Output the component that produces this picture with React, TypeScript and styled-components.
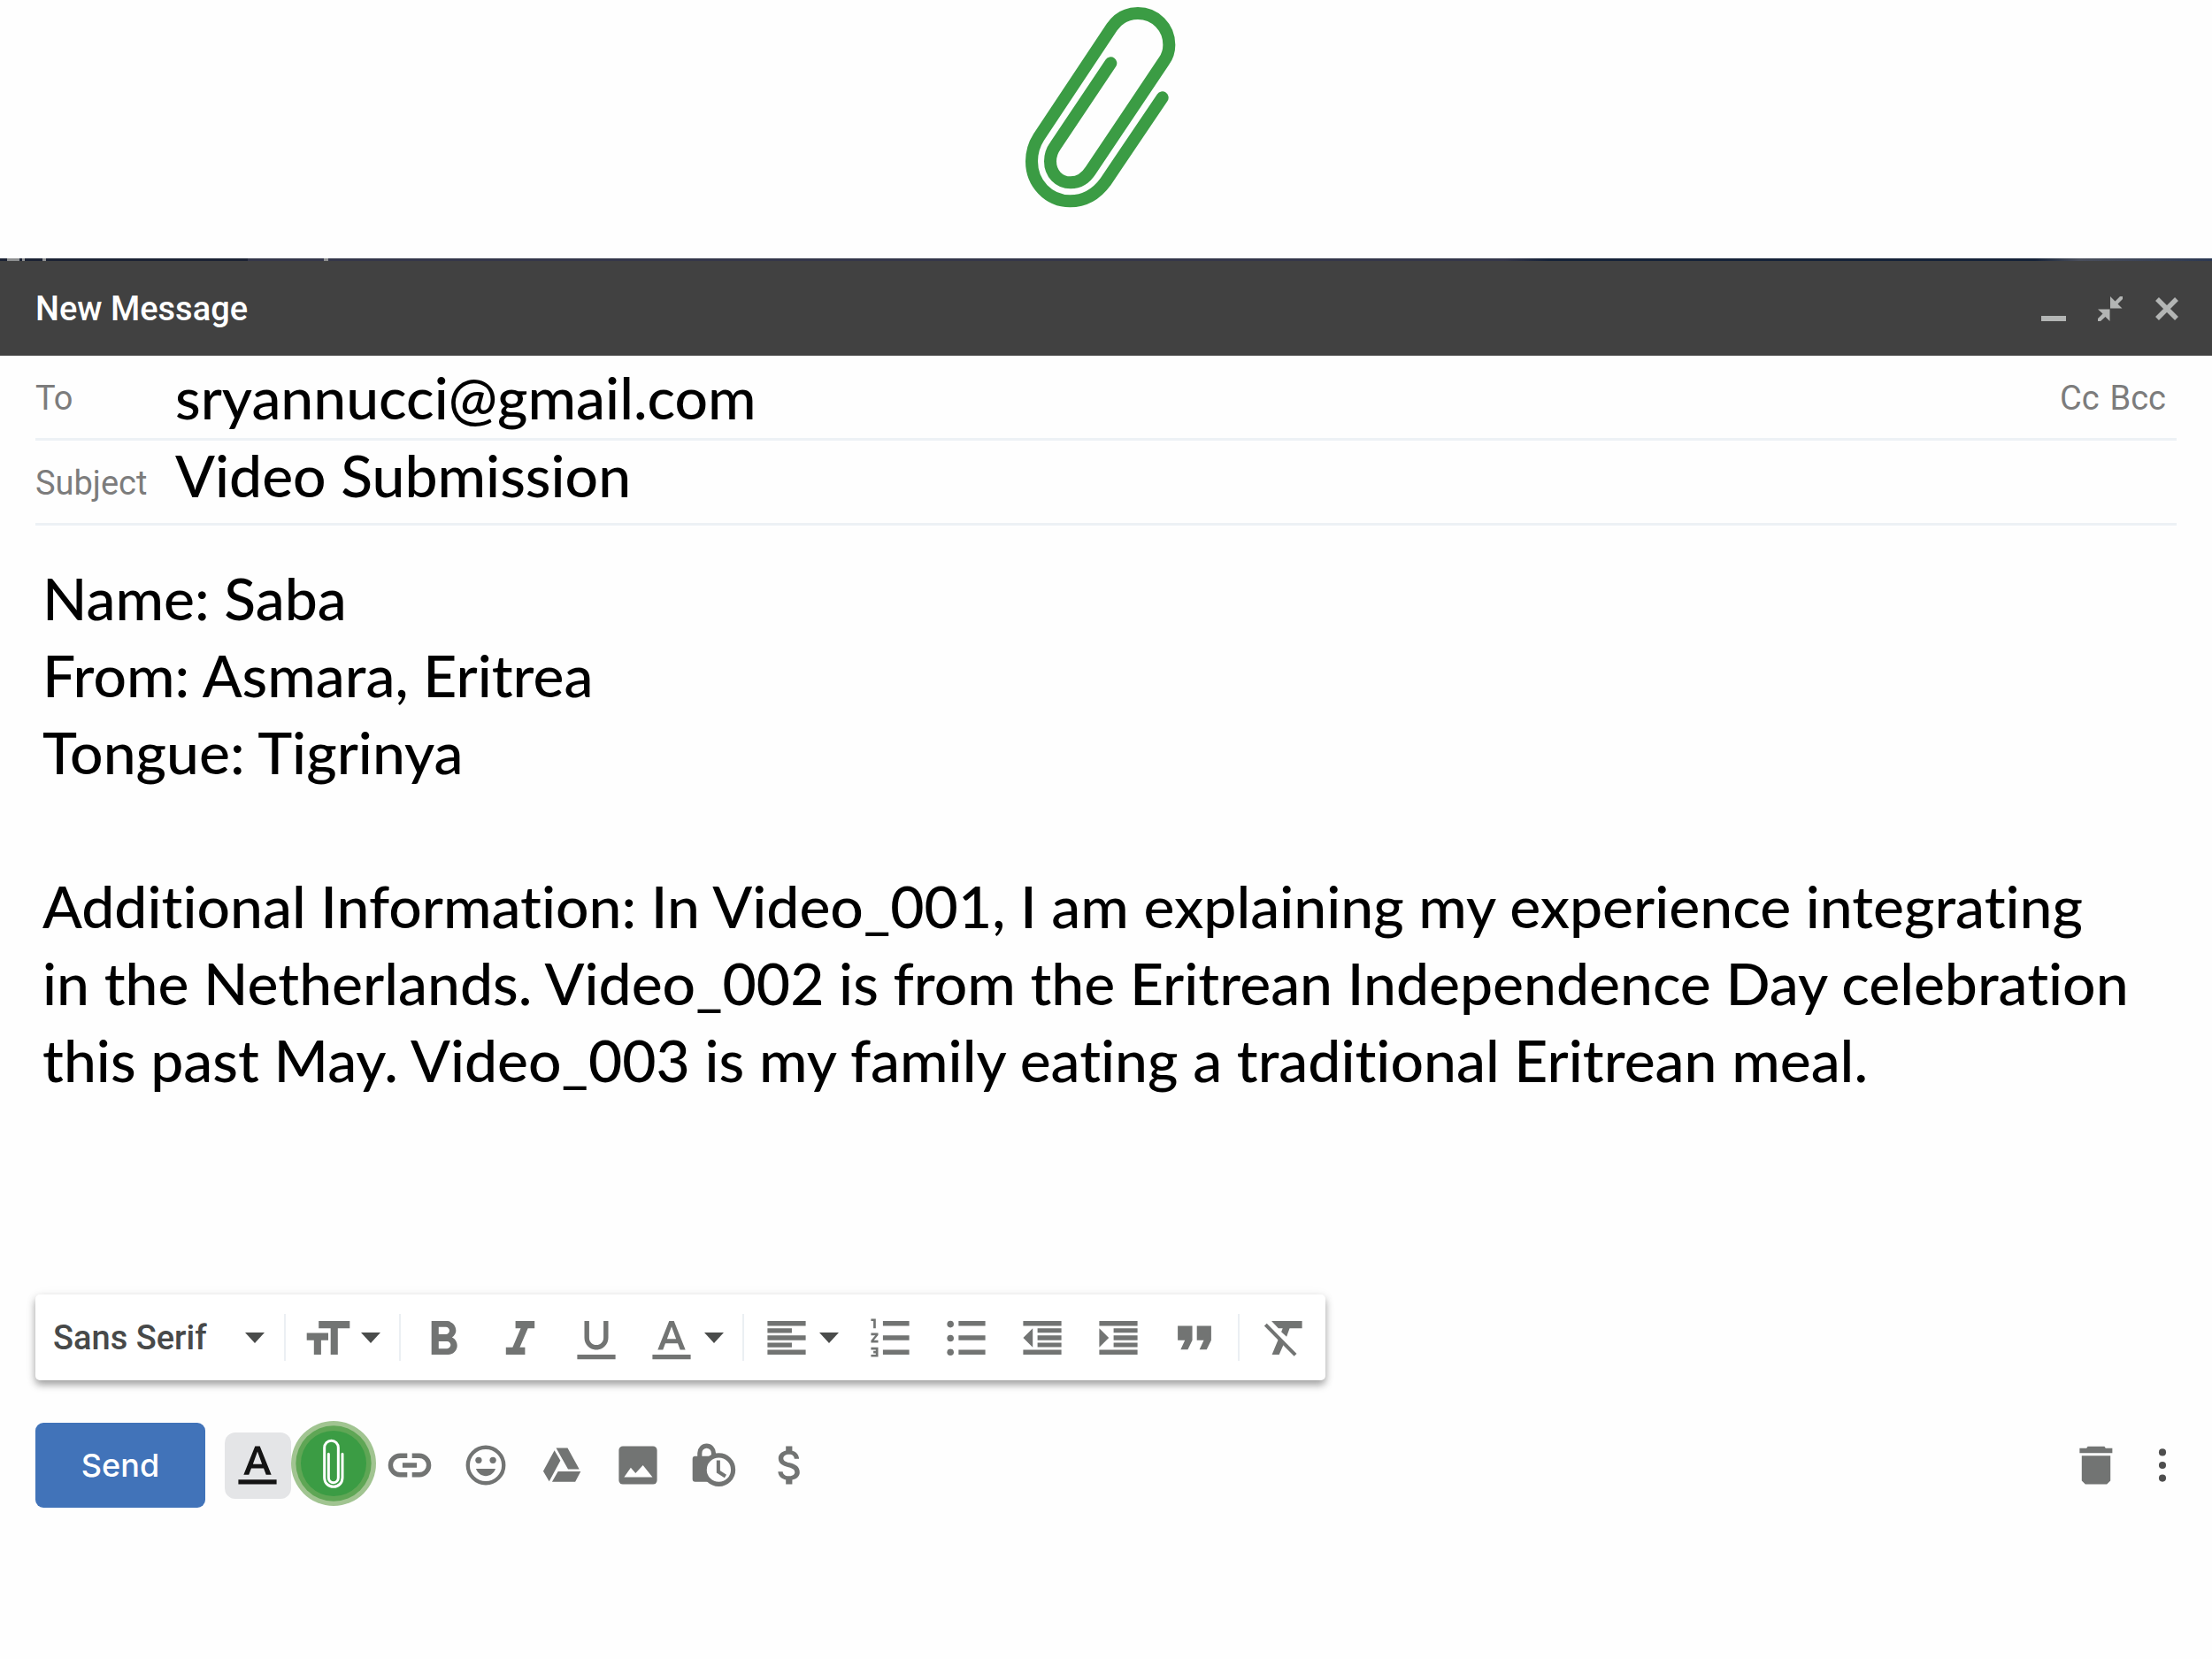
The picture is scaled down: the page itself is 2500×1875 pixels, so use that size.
import React, { useState } from "react";
import styled, { createGlobalStyle } from "styled-components";

const GlobalStyle = createGlobalStyle`
  *, *::before, *::after { box-sizing: border-box; }
  body { margin: 0; background: #fefefe; }
  button, input, select, textarea { font: inherit; color: inherit; }
`;

const ui = `Roboto, "Liberation Sans", sans-serif`;
const writing = `Futura, Lato, "Liberation Sans", sans-serif`;

const Page = styled.main`
  display: flex;
  flex-direction: column;
  font-family: ${ui};
  font-size: 38px;
  line-height: 44px;
  color: #727473;
`;

const Hero = styled.div`
  display: flex;
  justify-content: center;
  height: 292px;
`;

const Backdrop = styled.div`
  height: 3px;
  background: linear-gradient(
    90deg,
    #1b2233 0 8px,
    #8d8f90 8px 22px,
    #1b2233 22px 25px,
    #8d8f90 25px 28px,
    #1b2233 28px 48px,
    #8d8f90 48px 52px,
    #1b2233 52px 280px,
    #34364a 280px 366px,
    #8d8f90 366px 371px,
    #34364a 371px 68%,
    #152238 70% 92%,
    #4a4f5c 94%,
    #2c3852
  );
`;

const TitleBar = styled.header`
  display: flex;
  align-items: center;
  justify-content: space-between;
  height: 107px;
  padding: 0 19px 0 40px;
  background: #414141;
  color: #b3b5b4;
`;

const Title = styled.h1`
  margin: 0;
  font-size: 38px;
  font-weight: 500;
  color: #fff;
`;

const Group = styled.div`
  display: flex;
  align-items: center;
`;

const BareButton = styled.button`
  display: flex;
  align-items: center;
  justify-content: center;
  flex: none;
  padding: 0;
  border: 0;
  background: none;
  cursor: pointer;
`;

const WindowButton = styled(BareButton)`
  width: 64px;
  height: 64px;
`;

const Form = styled.form`
  display: flex;
  flex-direction: column;
  padding: 0 40px;
`;

const Field = styled.div`
  display: flex;
  align-items: center;
  height: 96px;
  padding-top: 3px;
  border-bottom: 3px solid #edf1f5;
`;

const FieldLabel = styled.label`
  width: 158px;
  color: #7c7c7c;
`;

const FieldInput = styled.input<{ $raised?: boolean }>`
  flex: 1;
  min-width: 0;
  height: 90px;
  padding: 0 0 ${(p) => (p.$raised ? 20 : 4)}px;
  border: 0;
  outline: 0;
  background: none;
  font-family: ${writing};
  font-size: 66px;
  font-weight: 500;
  font-variant-ligatures: none;
  color: #000;
`;

const CopyLinks = styled.div`
  display: flex;
  gap: 12px;
  padding-right: 12px;
  color: #7c7c7c;
`;

const MessageBody = styled.textarea`
  width: 100%;
  margin: 0 0 48px;
  padding: 38px 0 0 8px;
  border: 0;
  outline: 0;
  resize: none;
  overflow: hidden;
  background: none;
  font-family: ${writing};
  font-size: 66px;
  font-weight: 500;
  font-variant-ligatures: none;
  line-height: 87px;
  color: #000;
`;

const FormatBar = styled.div`
  display: flex;
  align-items: center;
  align-self: flex-start;
  height: 97px;
  padding-right: 5px;
  border-radius: 5px;
  background: #fff;
  box-shadow: 0 5px 8px rgba(0, 0, 0, 0.34), 0 2px 14px rgba(0, 0, 0, 0.07);
`;

const FontPicker = styled.div`
  display: grid;
  align-items: center;
  width: 275px;
  height: 97px;
  color: #474949;

  > * { grid-area: 1 / 1; }
  > svg { justify-self: end; margin-right: 16px; pointer-events: none; }
`;

const FontSelect = styled.select`
  width: 100%;
  height: 97px;
  padding: 0 0 0 20px;
  border: 0;
  outline: 0;
  appearance: none;
  background: none;
  font-weight: 500;
`;

const Divider = styled.span`
  width: 2px;
  height: 53px;
  margin: 0 6px;
  background: #ebeff3;
`;

const ToolButton = styled(BareButton)`
  width: 86px;
  height: 96px;
`;

const MenuButton = styled(BareButton)`
  gap: 10px;
  height: 96px;
  padding: 0 15px;
`;

const ActionBar = styled.div`
  display: flex;
  align-items: center;
  justify-content: space-between;
  height: 96px;
  margin: 48px -16px 0 0;
`;

const SendButton = styled.button`
  width: 192px;
  height: 96px;
  margin-right: 16px;
  padding: 0;
  border: 0;
  border-radius: 9px;
  background: #4173b9;
  color: #fff;
  font-family: Inter, Roboto, sans-serif;
  font-size: 36px;
  font-weight: 500;
  cursor: pointer;
`;

const ActiveTile = styled.span`
  display: flex;
  align-items: center;
  justify-content: center;
  width: 75px;
  height: 75px;
  border-radius: 12px;
  background: #e4e5e7;
  color: #141414;
`;

const MoreButton = styled(BareButton)`
  width: 64px;
  height: 96px;
  color: #4e4e4e;
`;

const Glyph = styled.svg`
  display: block;
  flex: none;
  fill: currentColor;
`;

function Icon({ children, viewBox = "0 0 20 20" }: { children: React.ReactNode; viewBox?: string }) {
  return (
    <Glyph width="54" height="54" viewBox={viewBox} aria-hidden="true">
      {children}
    </Glyph>
  );
}

function Caret() {
  return (
    <Glyph width="22" height="12" viewBox="0 0 22 12" aria-hidden="true">
      <path d="M0 0h22L11 12z" fill="#4a4c4b" />
    </Glyph>
  );
}

const letterA = (
  <path
    fillRule="evenodd"
    d="M9 3h2l4.8 12h-2.2l-1-2.7H7.4l-1 2.7H4.2zM8.1 10.5h3.8L10 5.3zM2 17h16v2H2z"
  />
);

const tools = {
  size: <path d="M6 3h13v3h-5v11h-3V6H6zM1 8h9v3H7v6H4v-6H1z" />,
  bold: (
    <path
      transform="translate(-2.3 -1)"
      d="M15.6 10.79c.97-.67 1.65-1.77 1.65-2.79 0-2.26-1.75-4-4-4H7v14h7.04c2.09 0 3.71-1.7 3.71-3.79 0-1.52-.86-2.82-2.15-3.42zM10 6.5h3c.83 0 1.5.67 1.5 1.5s-.67 1.5-1.5 1.5h-3v-3zm3.5 9H10v-3h3.5c.83 0 1.5.67 1.5 1.5s-.67 1.5-1.5 1.5z"
    />
  ),
  italic: <path d="M8 3v3h2.2l-3.4 8H4v3h8v-3H9.8l3.4-8H16V3z" />,
  underline: (
    <path d="M10 15c-2.8 0-5-2.2-5-5V3h2v7c0 1.7 1.3 3 3 3s3-1.3 3-3V3h2v7c0 2.8-2.2 5-5 5zM2 17h16v2H2z" />
  ),
  align: <path d="M2 3h16v2H2zM2 6h10.2v2H2zM2 9h16v2H2zM2 12h10.2v2H2zM2 15h16v2H2z" />,
  numbered: (
    <path d="M2 15h2v.5H3v1h1v.5H2v1h3v-4H2zM3 6h1V2H2v1h1zM2 9h1.8L2 11.1v.9h3v-1H3.2L5 8.9V8H2zM7 3h11v2H7zM7 9h11v2H7zM7 15h11v2H7z" />
  ),
  bullets: (
    <>
      <circle cx="3.4" cy="4.3" r="1.4" />
      <circle cx="3.4" cy="10.2" r="1.4" />
      <circle cx="3.4" cy="16" r="1.4" />
      <path d="M6.8 3H18v2H6.8zM6.8 9H18v2H6.8zM6.8 15H18v2H6.8z" />
    </>
  ),
  outdent: <path d="M2 3h16v2H2zM8 6h10v1.9H8zM8 9h10v2H8zM8 12h10v1.9H8zM2 15h16v2H2zM2 10l4-4v8z" />,
  indent: <path d="M2 3h16v2H2zM8 6h10v1.9H8zM8 9h10v2H8zM8 12h10v1.9H8zM2 15h16v2H2zM2 6l4 4-4 4z" />,
  quote: <path d="M3 5h6.1v6l-1.9 3.9h-3L6 11H3zM11 5h6v6l-1.9 3.9h-3L13.9 11H11z" />,
  clear: (
    <>
      <path d="M5.2 3H18v3h-5.2l-1.3 3.5-2.2-2L9.9 6H8.1zM8.3 10.1L5.4 17h3l2-4.5z" />
      <path d="M2.7 4.5L15.2 17.2" stroke="currentColor" strokeWidth="1.5" />
    </>
  ),
  link: (
    <path d="M9 7H6a3 3 0 0 0 0 6h3v2H6A5 5 0 0 1 6 5h3zM11 5h3a5 5 0 0 1 0 10h-3v-2h3a3 3 0 0 0 0-6h-3zM7 9h6v2H7z" />
  ),
  emoji: (
    <>
      <circle cx="10" cy="10" r="7.5" fill="none" stroke="currentColor" strokeWidth="1.6" />
      <circle cx="7" cy="7.9" r="1.35" />
      <circle cx="13" cy="7.9" r="1.35" />
      <path d="M5.9 11.5h8.2c-.7 1.9-2.3 3-4.1 3s-3.4-1.1-4.1-3z" />
    </>
  ),
  drive: (
    <path d="M7.6 2.8h4.8l4.9 8.9h-4.7zM6.9 3.8l2.5 4.3-4.7 8.7-2.5-4.3zM8.4 12.6h9.5l-2.3 4.3H5.9z" />
  ),
  image: (
    <>
      <rect x="2" y="2" width="16" height="16" rx="1.7" />
      <path d="M4.2 15L7 11l2 2.3L12.1 10l4 5z" fill="#fefefe" />
    </>
  ),
  confidential: (
    <>
      <rect x="1" y="6.2" width="10" height="10.7" rx="1.1" />
      <path d="M4 7V4.9a2.9 3 0 0 1 5.8 0V7" fill="none" stroke="currentColor" strokeWidth="1.9" />
      <circle cx="12" cy="11.9" r="6" fill="#fefefe" stroke="currentColor" strokeWidth="1.9" />
      <path d="M11.8 8v4.7l3 1.9" fill="none" stroke="currentColor" strokeWidth="1.5" />
    </>
  ),
  money: (
    <path
      transform="translate(-.67 -.67) scale(.889)"
      d="M11.8 10.9c-2.27-.59-3-1.2-3-2.15 0-1.09 1.01-1.85 2.7-1.85 1.78 0 2.44.85 2.5 2.1h2.21c-.07-1.72-1.12-3.3-3.21-3.81V3h-3v2.16c-1.94.42-3.5 1.68-3.5 3.61 0 2.31 1.91 3.46 4.7 4.13 2.5.6 3 1.48 3 2.41 0 .69-.49 1.79-2.7 1.79-2.06 0-2.87-.92-2.98-2.1h-2.2c.12 2.19 1.76 3.42 3.68 3.83V21h3v-2.15c1.95-.37 3.5-1.5 3.5-3.55 0-2.84-2.43-3.81-4.7-4.4z"
    />
  ),
  trash: <path d="M6.5 2.1h7l.5.8h2.8v2H3.1v-2H6zM4 6h12v10.5l-1.5 1.5h-9L4 16.5z" />,
  more: (
    <>
      <circle cx="10" cy="4.6" r="1.5" />
      <circle cx="10" cy="10" r="1.5" />
      <circle cx="10" cy="15.4" r="1.5" />
    </>
  ),
};

function Tool({ name, label }: { name: keyof typeof tools; label: string }) {
  return (
    <ToolButton type="button" aria-label={label}>
      <Icon>{tools[name]}</Icon>
    </ToolButton>
  );
}

function PaperclipHero() {
  return (
    <svg width="240" height="292" viewBox="0 0 720 876" role="img" aria-label="Paperclip">
      <path
        d="M551 331L358 617C325 662 282 682 238 682C165 682 108 622 108 547C108 520 116 490 132 465L380 92C402 60 432 45 468 45C527 45 574 92 574 152C574 172 567 193 556 208L308 578C292 603 268 619 240 619C200 619 171 588 171 547C171 528 177 510 188 495L376 214"
        fill="none"
        stroke="#3b9c44"
        strokeWidth="42"
        strokeLinecap="round"
      />
    </svg>
  );
}

function AttachBadge() {
  return (
    <Glyph width="96" height="100" viewBox="0 0 288 300" aria-hidden="true">
      <circle cx="144" cy="144" r="144" fill="#a1c491" />
      <circle cx="144" cy="144" r="128" fill="#5fa655" />
      <circle cx="144" cy="144" r="111" fill="#3b9c44" />
      <path
        d="M174 112V192C174 210 161 223 144 223C126 223 113 210 113 192V91A23 24 0 0 1 160 91V192C160 202 153 209 144 209C134 209 127 202 127 192V112"
        fill="none"
        stroke="#fff"
        strokeWidth="9"
        strokeLinecap="round"
      />
    </Glyph>
  );
}

const draft = `Name: Saba
From: Asmara, Eritrea
Tongue: Tigrinya

Additional Information: In Video_001, I am explaining my experience integrating
in the Netherlands. Video_002 is from the Eritrean Independence Day celebration
this past May. Video_003 is my family eating a traditional Eritrean meal.`;

export default function App() {
  const [to, setTo] = useState("sryannucci@gmail.com");
  const [subject, setSubject] = useState("Video Submission");
  const [body, setBody] = useState(draft);

  return (
    <Page>
      <GlobalStyle />
      <Hero>
        <PaperclipHero />
      </Hero>
      <Backdrop />
      <TitleBar>
        <Title>New Message</Title>
        <Group>
          <WindowButton type="button" aria-label="Minimize">
            <Glyph width="28" height="28" viewBox="0 0 28 28">
              <path d="M0 22h28v6H0z" />
            </Glyph>
          </WindowButton>
          <WindowButton type="button" aria-label="Exit full screen">
            <Glyph width="28" height="28" viewBox="0 0 28 28">
              <path d="M14 0v13.5h13.5l-5-5L28 3V0h-3l-5.5 5.5zM0 14.5h13.5V28l-5-5L3 28H0v-3l5.500-5.500z" />
            </Glyph>
          </WindowButton>
          <WindowButton type="button" aria-label="Close">
            <Glyph width="26" height="26" viewBox="0 0 26 26">
              <path d="M2 2l22 22M24 2L2 24" stroke="currentColor" strokeWidth="5.5" />
            </Glyph>
          </WindowButton>
        </Group>
      </TitleBar>
      <Form onSubmit={(e) => e.preventDefault()}>
        <Field>
          <FieldLabel htmlFor="to">To</FieldLabel>
          <FieldInput id="to" value={to} onChange={(e) => setTo(e.target.value)} />
          <CopyLinks>
            <BareButton type="button">Cc</BareButton>
            <BareButton type="button">Bcc</BareButton>
          </CopyLinks>
        </Field>
        <Field>
          <FieldLabel htmlFor="subject">Subject</FieldLabel>
          <FieldInput id="subject" $raised value={subject} onChange={(e) => setSubject(e.target.value)} />
        </Field>
        <MessageBody
          aria-label="Message body"
          rows={9}
          spellCheck={false}
          value={body}
          onChange={(e) => setBody(e.target.value)}
        />
        <FormatBar role="toolbar" aria-label="Formatting options">
          <FontPicker>
            <FontSelect aria-label="Font">
              <option>Sans Serif</option>
            </FontSelect>
            <Caret />
          </FontPicker>
          <Divider />
          <MenuButton type="button" aria-label="Size">
            <Icon>{tools.size}</Icon>
            <Caret />
          </MenuButton>
          <Divider />
          <Tool name="bold" label="Bold" />
          <Tool name="italic" label="Italic" />
          <Tool name="underline" label="Underline" />
          <MenuButton type="button" aria-label="Text color">
            <Icon>{letterA}</Icon>
            <Caret />
          </MenuButton>
          <Divider />
          <MenuButton type="button" aria-label="Align">
            <Icon>{tools.align}</Icon>
            <Caret />
          </MenuButton>
          <Tool name="numbered" label="Numbered list" />
          <Tool name="bullets" label="Bulleted list" />
          <Tool name="outdent" label="Indent less" />
          <Tool name="indent" label="Indent more" />
          <Tool name="quote" label="Quote" />
          <Divider />
          <Tool name="clear" label="Remove formatting" />
        </FormatBar>
        <ActionBar>
          <Group>
            <SendButton type="submit">Send</SendButton>
            <ToolButton type="button" aria-label="Formatting options" aria-pressed="true">
              <ActiveTile>
                <Icon viewBox="0 1 20 20">{letterA}</Icon>
              </ActiveTile>
            </ToolButton>
            <ToolButton type="button" aria-label="Attach files">
              <AttachBadge />
            </ToolButton>
            <Tool name="link" label="Insert link" />
            <Tool name="emoji" label="Insert emoji" />
            <Tool name="drive" label="Insert files using Drive" />
            <Tool name="image" label="Insert photo" />
            <Tool name="confidential" label="Confidential mode" />
            <Tool name="money" label="Send money" />
          </Group>
          <Group>
            <ToolButton type="button" aria-label="Discard draft">
              <Icon>{tools.trash}</Icon>
            </ToolButton>
            <MoreButton type="button" aria-label="More options">
              <Icon>{tools.more}</Icon>
            </MoreButton>
          </Group>
        </ActionBar>
      </Form>
    </Page>
  );
}
